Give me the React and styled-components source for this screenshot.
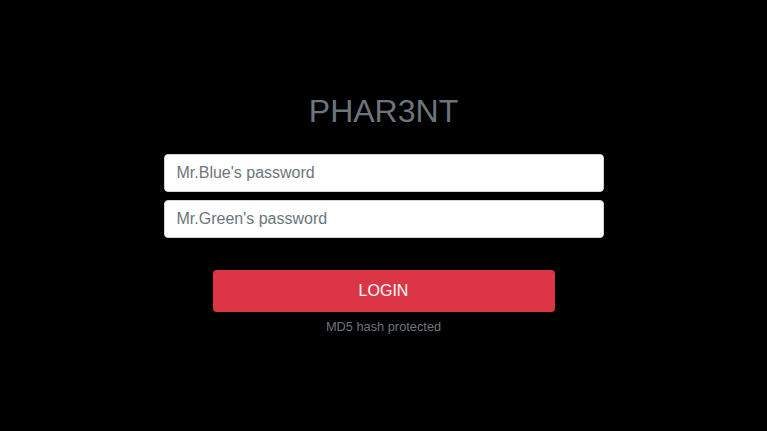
import React from 'react';
import styled, { createGlobalStyle } from 'styled-components';

const GlobalStyle = createGlobalStyle`
  html, body {
    margin: 0;
    padding: 0;
    background: #000;
    font-family: "Liberation Sans", Arial, sans-serif;
  }
  * { box-sizing: border-box; }
`;

const Page = styled.div`
  min-height: 431px;
  padding-bottom: 5px;
  display: flex;
  align-items: center;
  justify-content: center;
`;

const Form = styled.form`
  width: 440px;
  display: flex;
  flex-direction: column;
  align-items: center;
`;

const Title = styled.h1`
  margin: 0 0 24px;
  font-size: 32px;
  font-weight: 400;
  line-height: 1.2;
  color: #6c757d;
`;

const Input = styled.input`
  width: 100%;
  height: 38px;
  padding: 6px 12px;
  margin-bottom: 8px;
  font-family: inherit;
  font-size: 16px;
  color: #495057;
  background: #fff;
  border: 1px solid #ced4da;
  border-radius: 4px;
  outline: none;

  &::placeholder {
    color: #6c757d;
  }
`;

const Button = styled.button`
  width: 342px;
  height: 42px;
  margin-top: 24px;
  font-family: inherit;
  font-size: 16px;
  color: #fff;
  background: #dc3545;
  border: none;
  border-radius: 4px;
  cursor: pointer;
`;

const Note = styled.small`
  margin-top: 7px;
  font-size: 12.8px;
  color: #6c757d;
`;

export default function App() {
  return (
    <>
      <GlobalStyle />
      <Page>
        <Form onSubmit={(e) => e.preventDefault()}>
          <Title>PHAR3NT</Title>
          <Input type="password" placeholder="Mr.Blue's password" />
          <Input type="password" placeholder="Mr.Green's password" />
          <Button type="submit">LOGIN</Button>
          <Note>MD5 hash protected</Note>
        </Form>
      </Page>
    </>
  );
}
